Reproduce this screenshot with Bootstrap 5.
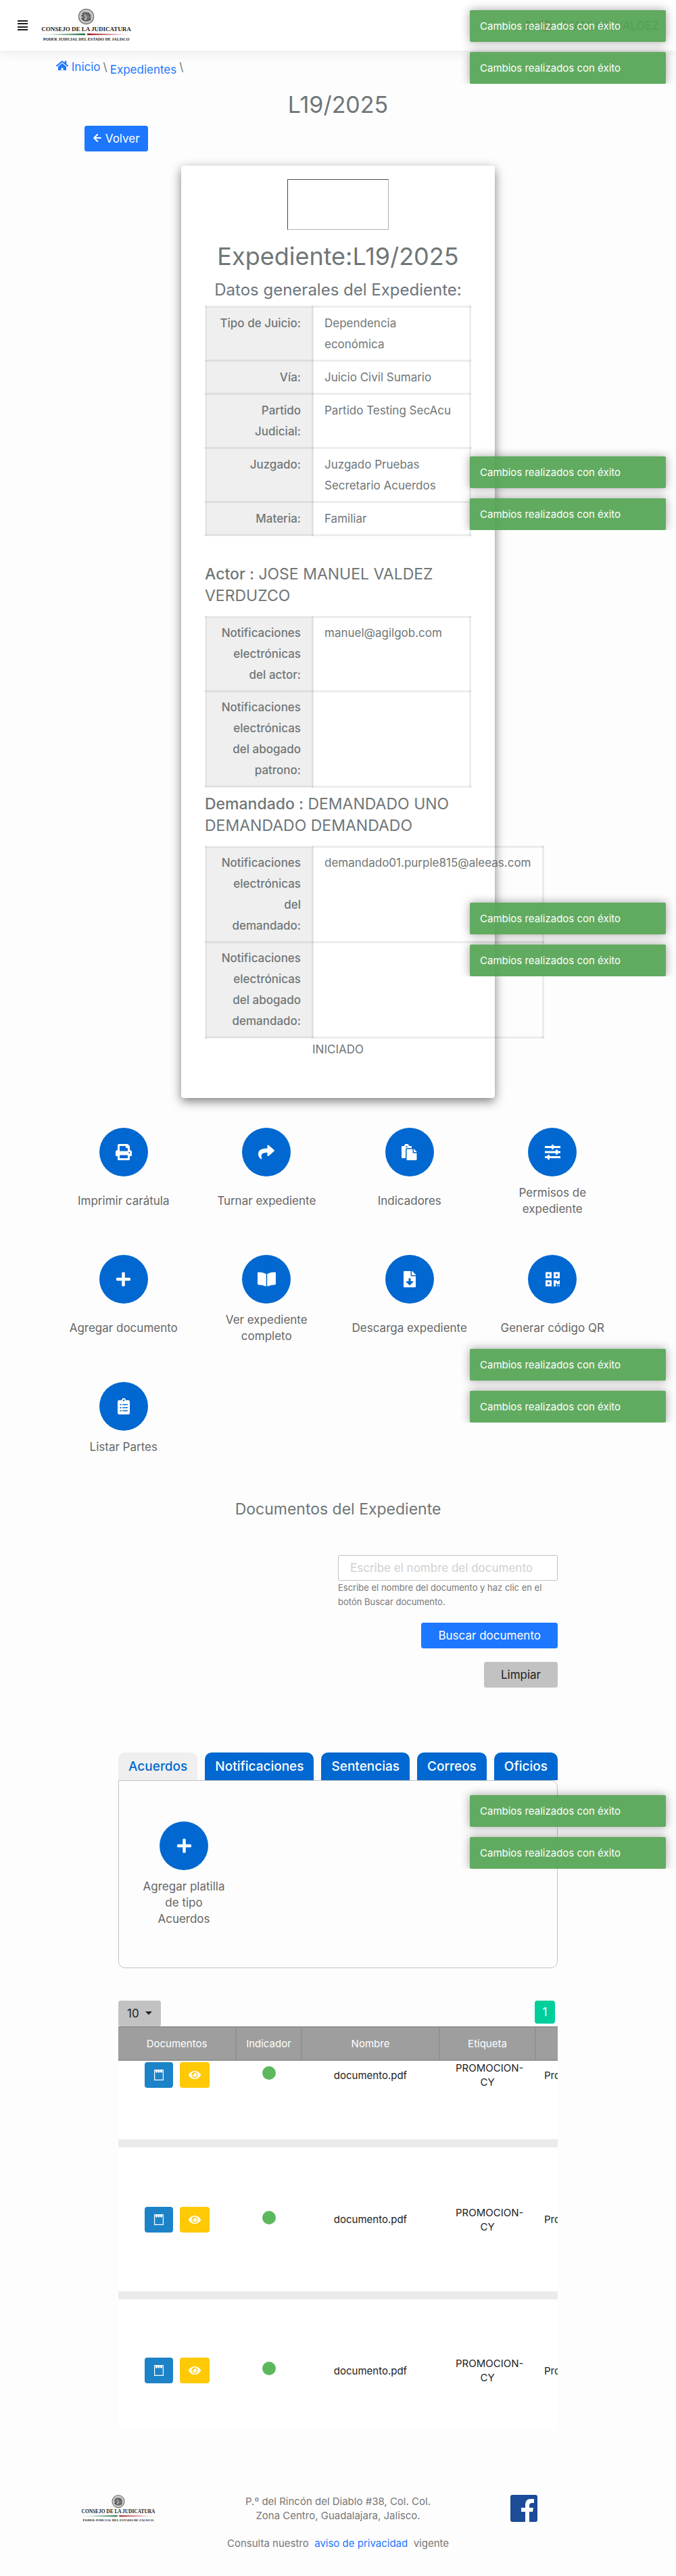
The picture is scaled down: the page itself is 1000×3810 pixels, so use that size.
<!DOCTYPE html>
<html lang="es">
<head>
<meta charset="utf-8">
<meta name="viewport" content="width=device-width, initial-scale=1">
<title>Expediente L19/2025</title>
<link href="https://cdn.jsdelivr.net/npm/bootstrap@5.3.0/dist/css/bootstrap.min.css" rel="stylesheet">
<style>
body{font-family:Inter,"Open Sans",sans-serif;font-size:17px;line-height:24px;color:#6f7677;background:#fdfdfd;position:relative}
a{color:#1e77ff;text-decoration:none}
h1,h2,h3,p{margin:0}
.topbar{height:75px;background:#fff;box-shadow:0 4px 15px rgba(0,0,0,.08);padding:0 25px 0 26px}
.topbar .brand{margin:0 0 1px 16px}
.bell-count{background:#d9534f;border-radius:8px;font-size:11px;line-height:16px;padding:0 5px;color:#fff}
.menu-btn{border:0;background:none;padding:0;line-height:0}
.crumbs{padding:12px 83px 0}
.big-title{font-size:36px;line-height:44px;font-weight:400}
.page-title{margin:18px 0 9px;font-size:34px}
.back-row{--bs-gutter-x:250px}
.btn{--bs-btn-font-size:17px;--bs-btn-border-radius:3px;--bs-btn-line-height:24px;height:38px}
.btn-main{--bs-btn-bg:#1e77ff;--bs-btn-color:#fff;--bs-btn-border-color:#1e77ff}
.btn-soft{--bs-btn-bg:#c2c2c2;--bs-btn-color:#222;--bs-btn-border-color:#c2c2c2}
.btn-back{padding-left:11px;padding-right:11px}
.wide-btn{padding-left:24px;padding-right:24px}
.sheet{max-width:464px;background:#fff;border-radius:4px;box-shadow:0 5px 15px rgba(0,0,0,.5);padding:20px 35px 0;margin-top:21px}
.code-frame{width:150px;height:75px;border:1px solid #b3b3b3;border-color:#4a4a4a #b3b3b3 #b3b3b3 #4a4a4a}
.sheet h2{margin-top:17px;white-space:nowrap}
.sheet h3,.docs-title{font-size:23px;line-height:32px;font-weight:400}
.sheet h3.sub{color:#6c757d;font-size:24px;white-space:nowrap;margin:12px 0 7px}
.sheet h3.who{padding-bottom:14px}
.sheet h3 b{font-weight:500}
.facts{width:100%;border-collapse:collapse;line-height:31px}
.facts th,.facts td{border:3px solid rgba(0,0,0,.07);padding:8px 16px 7px;vertical-align:top}
.facts.party th,.facts.party td{padding-top:7px}
.facts th{width:158px;background:#efefef;text-align:right;font-weight:500}
.facts.over{width:502px;position:relative}
.status{padding-bottom:56px;line-height:32px}
.actions{max-width:846px;margin-top:44px}
.action{color:#666;text-align:center}
.action .disc{width:72px;height:72px;border-radius:50%;background:#0068d0;color:#fff}
.action .cap{margin-top:12px}
.actions .action{margin-bottom:56px}
.tall{min-height:48px}
.stack{gap:20px}
.pair-gap{gap:10px}
.area{max-width:650px}
.finder{width:50%}
.finder input{border:1px solid #c2c2c2;border-radius:3px;height:38px;padding:6px 17px;background:#fff;font-size:17px}
.finder input::placeholder{color:#d0d0d0}
.finder .hint{font-size:13px;line-height:21px;color:#777}
.nav-tabs{--bs-nav-tabs-border-width:0px;gap:11px;flex-wrap:nowrap}
.nav-tabs .nav-link{background:#0068d0;color:#fff;border:0;border-radius:10px 10px 0 0;font-size:19px;line-height:25px;font-weight:500;padding:8px 15px;height:41px;margin:0}
.nav-tabs .nav-link.active{background:#efefef;color:#0068d0}
.pane{border:1px solid #c2c2c2;border-radius:0 10px 10px 10px;height:278px;padding:60px 32px}
.pane .action{width:128px}
.pager{background:#00cf9b;color:#fff;width:30px;height:34px;border-radius:4px;line-height:34px;margin-right:4px}
.docs{width:850px;table-layout:fixed;border-collapse:collapse;color:#222;font-size:15px;line-height:21px;text-align:center;background:#fff}
.docs th{background:#9e9e9e;color:#fff;height:49px;font-weight:400;border:2px solid #919191;border-width:2px 0 2px 2px}
.docs th:first-child{border-left:0}
.docs td{border-bottom:12px solid #ebebeb;vertical-align:middle;padding:0 24px;height:225px}
.docs tr:last-child td{border:0;height:200px;padding-top:16px}
.docs tr.first td{height:121px;padding-bottom:74px}
.docs td.pair{padding-left:0;padding-right:0}
.docs td:last-child{text-align:left;padding-left:13px}
.dot{width:20px;height:20px;border-radius:50%;background:#5cb85c;display:block;margin:-6px auto 0}
.btn-note,.btn-look{padding:0;border:0;border-radius:4px;height:38px;color:#fff;line-height:0}
.btn-note{width:42px;background:#1d83c8}
.btn-look{width:44px;background:#ffc905}
.foot{max-width:766px;font-size:15px;line-height:21px;color:#777;margin-top:94px}
.toasts{position:absolute;right:15px;width:290px;clip-path:inset(-16px -15px 0 -20px);opacity:.9}
.note{height:47px;background:#51a351;color:#fff;font-size:15px;line-height:21px;padding:13px 15px;border-radius:2px;box-shadow:0 0 14px rgba(0,0,0,.4)}
.note + .note{margin-top:15px}
.t1{top:15px}.t2{top:675px}.t3{top:1335px}.t4{top:1995px}.t5{top:2655px}
</style>
<script src="https://cdn.jsdelivr.net/npm/bootstrap@5.3.0/dist/js/bootstrap.bundle.min.js"></script>
</head>
<body>
<svg width="0" height="0" class="position-absolute" aria-hidden="true">
<defs>
<linearGradient id="gr"><stop offset="0" stop-color="#17693a" stop-opacity="0"/><stop offset="1" stop-color="#17693a"/></linearGradient>
<linearGradient id="rd"><stop offset="0" stop-color="#a3121f"/><stop offset="1" stop-color="#a3121f" stop-opacity="0"/></linearGradient>
<symbol id="seal" viewBox="0 0 282 96">
<circle cx="141" cy="23" r="22" fill="#d4d4d4" stroke="#777" stroke-width="3"/>
<circle cx="141" cy="23" r="16" fill="#bbb" stroke="#999" stroke-width="1"/>
<path d="M130 14q8-6 13 1l7 3q6 7 2 14l-6-3q-2 7-9 6l-3-5-6 1 4-7-5-4 6-1zM140 12l9 1 5 8M127 29q10 12 28 3" fill="#777" stroke="#444" stroke-width="2"/>
<path d="M137 18l5 8-4 5" fill="none" stroke="#eee" stroke-width="2"/>
<text x="141" y="66" text-anchor="middle" font-family="Liberation Serif, serif" font-weight="700" font-size="18" fill="#222">CONSEJO DE LA JUDICATURA</text>
<path d="M0 76Q70 73 138 73v5Q70 78 0 76z" fill="url(#gr)"/><path d="M144 73q70 0 138 3-70 2-138 2z" fill="url(#rd)"/>
<text x="141" y="94" text-anchor="middle" font-family="Liberation Serif, serif" font-weight="700" font-size="12" fill="#222">PODER JUDICIAL DEL ESTADO DE JALISCO</text>
</symbol>
<symbol id="plus" viewBox="0 0 448 512"><path d="M416 208H272V64a32 32 0 0 0-32-32h-32a32 32 0 0 0-32 32v144H32a32 32 0 0 0-32 32v32a32 32 0 0 0 32 32h144v144a32 32 0 0 0 32 32h32a32 32 0 0 0 32-32V304h144a32 32 0 0 0 32-32v-32a32 32 0 0 0-32-32z"/></symbol>
<symbol id="pad" viewBox="0 0 14 18"><path d="M.6 1.600h12.800v14.800H.6z" fill="none" stroke="currentColor" stroke-width="1.200"/><path d="M2 1h3v3.500L3.500 6 2 4.500zM5.500 1h3v3.500L7 6 5.500 4.500zM9 1h3v3.500L10.500 6 9 4.500z" fill="currentColor"/></symbol>
<symbol id="eye" viewBox="0 0 576 512"><path fill="currentColor" d="M572.500 241.400C518.300 135.600 410.900 64 288 64S57.700 135.600 3.500 241.400a32.400 32.400 0 0 0 0 29.200C57.700 376.400 165.100 448 288 448s230.300-71.600 284.500-177.400a32.400 32.400 0 0 0 0-29.200zM288 400a144 144 0 1 1 144-144 144 144 0 0 1-144 144zm0-240a95.300 95.300 0 0 0-25.300 3.800 47.900 47.900 0 0 1-66.900 66.900A95.800 95.800 0 1 0 288 160z"/></symbol>
</defs></svg>

<header class="topbar d-flex align-items-center">
<button class="menu-btn" aria-label="Menú"><svg width="15" height="17" fill="#1c1c1c"><path d="M0 1h15v2H0zM0 5h15v2H0zM0 10h15v2H0zM0 14h15v2H0z"/></svg></button>
<a class="brand" href="#"><svg width="141" height="48"><use href="#seal"/></svg></a>
<div class="ms-auto d-flex align-items-center gap-2"><svg width="14" height="14" viewBox="0 0 14 14" fill="#444"><path d="M7 0q4 1 4 6l2 5H1l2-5q0-5 4-6zM5 12h4l-2 2z"/></svg><span class="bell-count">12</span><span class="ms-2">MANUEL VALDEZ</span></div>
</header>

<nav class="crumbs d-flex gap-1" aria-label="Ruta">
<a href="#"><svg width="18" height="16" viewBox="0 0 576 512" fill="currentColor" class="align-baseline"><path d="M280 148L96 300v164a16 16 0 0 0 16 16h112a16 16 0 0 0 16-16v-96h96v96a16 16 0 0 0 16 16h112a16 16 0 0 0 16-16V300L296 148a12 12 0 0 0-16 0zM572 251l-84-69V44a12 12 0 0 0-12-12h-56a12 12 0 0 0-12 12v72l-90-74a48 48 0 0 0-61 0L4 251a12 12 0 0 0-2 17l26 31a12 12 0 0 0 17 2L280 107a12 12 0 0 1 15 0l236 194a12 12 0 0 0 17-2l26-31a12 12 0 0 0-2-17z"/></svg> Inicio</a><span>\</span><a href="#" class="pt-1">Expedientes</a><span>\</span>
</nav>
<h1 class="big-title page-title text-center">L19/2025</h1>
<div class="container-fluid back-row"><button class="btn btn-main btn-back"><svg width="14" height="14" viewBox="0 0 448 512" fill="none" stroke="currentColor" stroke-width="75" stroke-linecap="round" stroke-linejoin="round" class="align-baseline"><path d="M230 70L50 256l180 186M60 256h340"/></svg> Volver</button></div>

<section class="sheet mx-auto">
<div class="code-frame mx-auto"></div>
<h2 class="big-title d-flex justify-content-center">Expediente:L19/2025</h2>
<h3 class="sub d-flex justify-content-center">Datos generales del Expediente:</h3>
<table class="facts">
<tr><th scope="row">Tipo de Juicio:</th><td>Dependencia<br>económica</td></tr>
<tr><th scope="row">Vía:</th><td>Juicio Civil Sumario</td></tr>
<tr><th scope="row">Partido<br>Judicial:</th><td>Partido Testing SecAcu</td></tr>
<tr><th scope="row">Juzgado:</th><td>Juzgado Pruebas<br>Secretario Acuerdos</td></tr>
<tr><th scope="row">Materia:</th><td>Familiar</td></tr>
</table>
<h3 class="who mt-4 pt-3"><b>Actor :</b> JOSE MANUEL VALDEZ<br>VERDUZCO</h3>
<table class="facts party">
<tr><th scope="row">Notificaciones<br>electrónicas<br>del actor:</th><td>manuel@agilgob.com</td></tr>
<tr><th scope="row">Notificaciones<br>electrónicas<br>del abogado<br>patrono:</th><td></td></tr>
</table>
<h3 class="who pt-2"><b>Demandado :</b> DEMANDADO UNO<br>DEMANDADO DEMANDADO</h3>
<table class="facts party over">
<tr><th scope="row">Notificaciones<br>electrónicas<br>del<br>demandado:</th><td>demandado01.purple815@aleeas.com</td></tr>
<tr><th scope="row">Notificaciones<br>electrónicas<br>del abogado<br>demandado:</th><td></td></tr>
</table>
<p class="status text-center">INICIADO</p>
</section>

<section class="actions row row-cols-4 g-0 mx-auto pb-2">
<a href="#" class="col action"><span class="disc d-flex align-items-center justify-content-center mx-auto"><svg width="24" height="24" viewBox="0 0 512 512" fill="currentColor"><path d="M448 192V77a32 32 0 0 0-9-22L393 9a32 32 0 0 0-22-9H96a32 32 0 0 0-32 32v160a64 64 0 0 0-64 64v112a16 16 0 0 0 16 16h48v96a32 32 0 0 0 32 32h320a32 32 0 0 0 32-32v-96h48a16 16 0 0 0 16-16V256a64 64 0 0 0-64-64zm-64 256H128v-96h256zm0-224H128V64h192v48a16 16 0 0 0 16 16h48zm48 72a24 24 0 1 1 24-24 24 24 0 0 1-24 24z"/></svg></span><span class="cap tall d-flex align-items-center justify-content-center">Imprimir carátula</span></a>
<a href="#" class="col action"><span class="disc d-flex align-items-center justify-content-center mx-auto"><svg width="24" height="24" viewBox="0 0 512 512" fill="currentColor"><path d="M503.700 189.800L327.700 37.900C312.300 24.500 288 35.300 288 56v80.100C127.400 137.900 0 170.100 0 322.300c0 61.400 39.600 122.300 83.300 154.100 13.700 9.900 33.100-2.500 28.100-18.600C66.100 312.800 132.900 274.300 288 272.100V360c0 20.700 24.300 31.500 39.700 18.200l176-152c11.100-9.600 11.100-26.800 0-36.400z"/></svg></span><span class="cap tall d-flex align-items-center justify-content-center">Turnar expediente</span></a>
<a href="#" class="col action"><span class="disc d-flex align-items-center justify-content-center mx-auto"><svg width="24" height="24" viewBox="0 0 512 512" fill="currentColor"><path d="M128 184a56 56 0 0 1 56-56h136V88a24 24 0 0 0-24-24h-57a80 80 0 0 0-158 0H24A24 24 0 0 0 0 88v336a24 24 0 0 0 24 24h104zm32-120a24 24 0 1 1-24 24 24 24 0 0 1 24-24zm192 208V160H184a24 24 0 0 0-24 24v304a24 24 0 0 0 24 24h272a24 24 0 0 0 24-24V288H368a16 16 0 0 1-16-16zm128-25v9h-96v-96h9z"/></svg></span><span class="cap tall d-flex align-items-center justify-content-center">Indicadores</span></a>
<a href="#" class="col action"><span class="disc d-flex align-items-center justify-content-center mx-auto"><svg width="25" height="24" viewBox="0 0 25 24" fill="currentColor"><path d="M1 3h10V1h3v2h10v3H14v2h-3V6H1zM1 10.500h16v-2h3v2h4v3h-4v2h-3v-2H1zM1 18h4v-2h3v2h16v3H8v2H5v-2H1z"/></svg></span><span class="cap tall d-flex align-items-center justify-content-center">Permisos de<br>expediente</span></a>
<a href="#" class="col action"><span class="disc d-flex align-items-center justify-content-center mx-auto"><svg width="21" height="24" fill="currentColor"><use href="#plus"/></svg></span><span class="cap tall d-flex align-items-center justify-content-center">Agregar documento</span></a>
<a href="#" class="col action"><span class="disc d-flex align-items-center justify-content-center mx-auto"><svg width="27" height="24" viewBox="0 0 576 512" fill="currentColor"><path d="M542 32c-55 3-163 14-230 55a16 16 0 0 0-8 14v364c0 12 13 19 23 14 69-35 169-44 218-47 17-1 30-14 30-30V62a31 31 0 0 0-33-30zM264 87C197 46 89 35 34 32A31 31 0 0 0 0 62v340c0 16 13 29 30 30 49 3 149 12 218 47 11 5 24-2 24-14V100a15 15 0 0 0-8-13z"/></svg></span><span class="cap tall d-flex align-items-center justify-content-center">Ver expediente<br>completo</span></a>
<a href="#" class="col action"><span class="disc d-flex align-items-center justify-content-center mx-auto"><svg width="18" height="24" viewBox="0 0 384 512" fill="currentColor"><path d="M224 136V0H24A24 24 0 0 0 0 24v464a24 24 0 0 0 24 24h336a24 24 0 0 0 24-24V160H248a24 24 0 0 1-24-24zm76 210l-96 95a16 16 0 0 1-23 0l-96-95c-10-10-3-27 11-27h64v-80a16 16 0 0 1 16-16h32a16 16 0 0 1 16 16v80h65c14 0 21 17 11 27zm77-241L279 7a24 24 0 0 0-17-7h-6v128h128v-6a24 24 0 0 0-7-17z"/></svg></span><span class="cap tall d-flex align-items-center justify-content-center">Descarga expediente</span></a>
<a href="#" class="col action"><span class="disc d-flex align-items-center justify-content-center mx-auto"><svg width="21" height="24" viewBox="0 0 448 512" fill="currentColor" fill-rule="evenodd"><path d="M0 224h192V32H0zM64 96h64v64H64zM256 32v192h192V32zm128 128h-64V96h64zM0 480h192V288H0zm64-128h64v64H64zM416 288h32v128h-96v-32h-32v96h-64V288h96v32h64zm0 160h32v32h-32zm-64 0h32v32h-32z"/></svg></span><span class="cap tall d-flex align-items-center justify-content-center">Generar código QR</span></a>
<a href="#" class="col action"><span class="disc d-flex align-items-center justify-content-center mx-auto"><svg width="18" height="24" viewBox="0 0 384 512" fill="currentColor"><path fill-rule="evenodd" d="M336 64h-80a64 64 0 0 0-128 0H48a48 48 0 0 0-48 48v352a48 48 0 0 0 48 48h288a48 48 0 0 0 48-48V112a48 48 0 0 0-48-48zM72 184h48v40H72zm0 96h48v40H72zm0 96h48v40H72zM168 40h48v48h-48zM152 188h168v32H152zm0 96h168v32H152zm0 96h168v32H152z"/></svg></span><span class="cap d-flex align-items-center justify-content-center">Listar Partes</span></a>
</section>

<h2 class="docs-title text-center">Documentos del Expediente</h2>
<main class="area mx-auto">
<form class="finder ms-auto pt-5 mt-1">
<input id="q" class="form-control d-block" type="text" placeholder="Escribe el nombre del documento" aria-label="Nombre del documento" aria-describedby="qh">
<div id="qh" class="hint">Escribe el nombre del documento y haz clic en el botón Buscar documento.</div>
<div class="stack d-flex flex-column align-items-end mt-3 pt-1"><button type="button" class="btn btn-main wide-btn">Buscar documento</button><button type="reset" class="btn btn-soft wide-btn">Limpiar</button></div>
</form>
<ul class="nav nav-tabs mt-5 pt-5">
<li class="nav-item"><a class="nav-link active" href="#">Acuerdos</a></li><li class="nav-item"><a class="nav-link" href="#">Notificaciones</a></li><li class="nav-item"><a class="nav-link" href="#">Sentencias</a></li><li class="nav-item"><a class="nav-link" href="#">Correos</a></li><li class="nav-item"><a class="nav-link" href="#">Oficios</a></li>
</ul>
<div class="pane"><a href="#" class="action d-block"><span class="disc d-flex align-items-center justify-content-center mx-auto"><svg width="21" height="24" fill="currentColor"><use href="#plus"/></svg></span><span class="cap d-block">Agregar platilla<br>de tipo<br>Acuerdos</span></a></div>
<div class="d-flex justify-content-between mt-5"><button class="btn btn-soft dropdown-toggle">10&nbsp;</button><a href="#" class="pager text-center">1</a></div>
<div class="overflow-hidden">
<table class="docs">
<colgroup><col style="width:174px"><col style="width:97px"><col style="width:204px"><col style="width:142px"><col></colgroup>
<thead><tr><th>Documentos</th><th>Indicador</th><th>Nombre</th><th>Etiqueta</th><th></th></tr></thead>
<tbody>
<tr class="first"><td class="pair"><div class="pair-gap d-flex justify-content-center"><button class="btn-note" aria-label="Detalle"><svg width="14" height="18"><use href="#pad"/></svg></button><button class="btn-look" aria-label="Ver"><svg width="18" height="16"><use href="#eye"/></svg></button></div></td><td><span class="dot"></span></td><td>documento.pdf</td><td>PROMOCION-<br>CY</td><td>Promoción</td></tr>
<tr><td class="pair"><div class="pair-gap d-flex justify-content-center"><button class="btn-note" aria-label="Detalle"><svg width="14" height="18"><use href="#pad"/></svg></button><button class="btn-look" aria-label="Ver"><svg width="18" height="16"><use href="#eye"/></svg></button></div></td><td><span class="dot"></span></td><td>documento.pdf</td><td>PROMOCION-<br>CY</td><td>Promoción</td></tr>
<tr><td class="pair"><div class="pair-gap d-flex justify-content-center"><button class="btn-note" aria-label="Detalle"><svg width="14" height="18"><use href="#pad"/></svg></button><button class="btn-look" aria-label="Ver"><svg width="18" height="16"><use href="#eye"/></svg></button></div></td><td><span class="dot"></span></td><td>documento.pdf</td><td>PROMOCION-<br>CY</td><td>Promoción</td></tr>
</tbody></table>
</div>
</main>
<footer class="foot mx-auto text-center pb-5">
<div class="row g-0 align-items-center"><div class="col-2 text-start"><svg width="116" height="40"><use href="#seal"/></svg></div><div class="col-8">P.º del Rincón del Diablo #38, Col. Col.<br>Zona Centro, Guadalajara, Jalisco.</div><div class="col-2 text-start"><a href="#" aria-label="Facebook"><svg width="40" height="40" viewBox="0 0 40 40"><rect width="40" height="40" rx="3" fill="#1c4b97"/><path d="M22 40V25h-6v-6h6v-4q0-9 8-9h5v6h-3q-4 0-4 4v3h6l-1 6h-5v15z" fill="#fff"/></svg></a></div></div>
<p class="mt-3 pt-1">Consulta nuestro &nbsp;<a href="#">aviso de privacidad</a>&nbsp; vigente</p>
</footer>

<div class="toasts t1"><div class="note">Cambios realizados con éxito</div><div class="note">Cambios realizados con éxito</div></div>
<div class="toasts t2"><div class="note">Cambios realizados con éxito</div><div class="note">Cambios realizados con éxito</div></div>
<div class="toasts t3"><div class="note">Cambios realizados con éxito</div><div class="note">Cambios realizados con éxito</div></div>
<div class="toasts t4"><div class="note">Cambios realizados con éxito</div><div class="note">Cambios realizados con éxito</div></div>
<div class="toasts t5"><div class="note">Cambios realizados con éxito</div><div class="note">Cambios realizados con éxito</div></div>
</body>
</html>
